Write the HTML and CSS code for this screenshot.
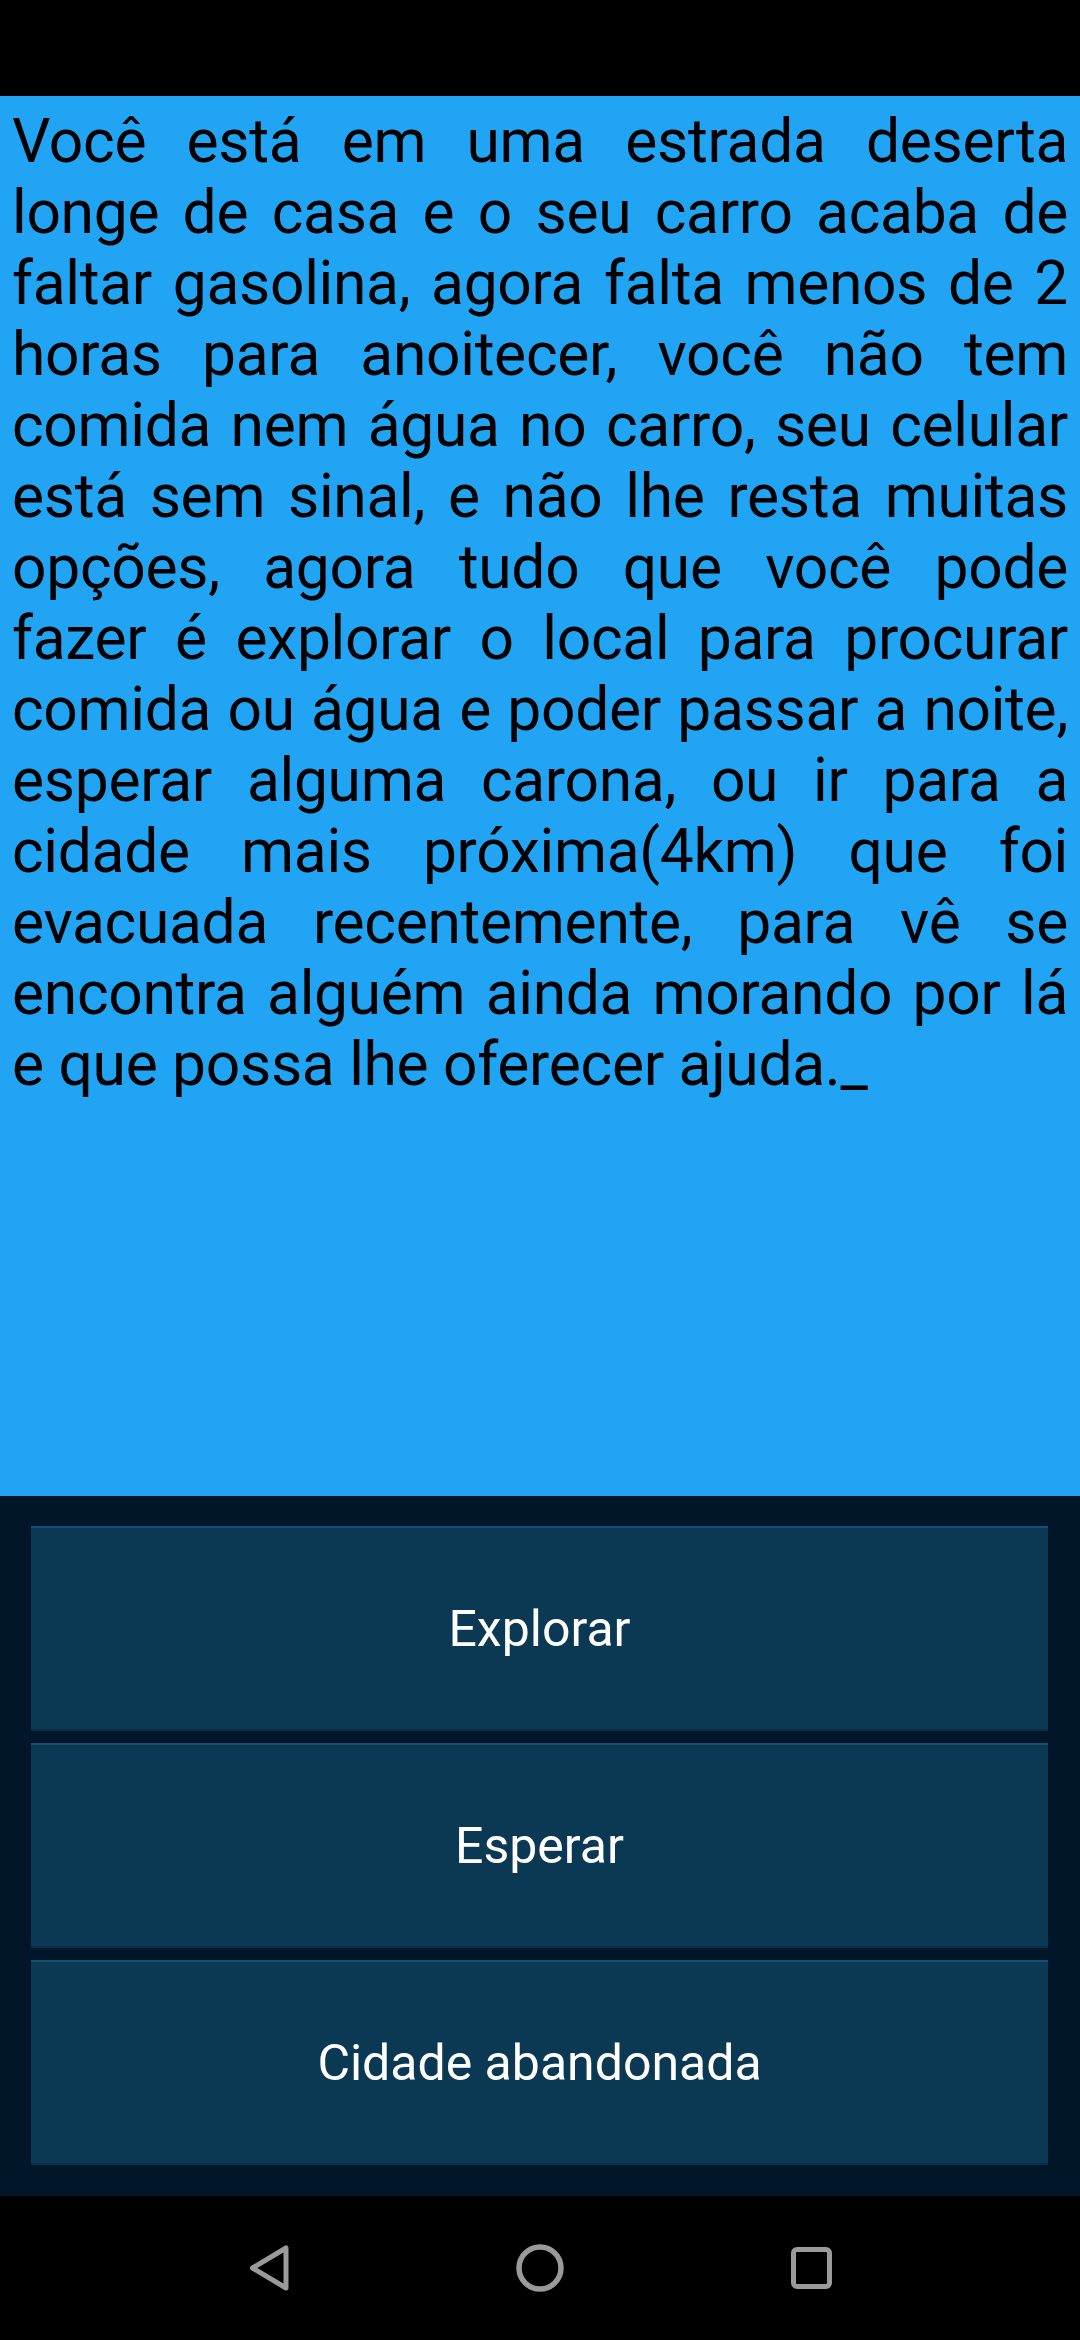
FILE: index.html
```html
<!DOCTYPE html>
<html lang="pt">
<head>
<meta charset="utf-8">
<title>Estrada deserta</title>
<link rel="stylesheet" href="styles.css">
</head>
<body>
<div class="screen">
  <div class="status-bar"></div>
  <main class="story">
    <p class="story-text"><span class="line">Você está em uma estrada deserta</span><span class="line">longe de casa e o seu carro acaba de</span><span class="line">faltar gasolina, agora falta menos de 2</span><span class="line">horas para anoitecer, você não tem</span><span class="line">comida nem água no carro, seu celular</span><span class="line">está sem sinal, e não lhe resta muitas</span><span class="line">opções, agora tudo que você pode</span><span class="line">fazer é explorar o local para procurar</span><span class="line">comida ou água e poder passar a noite,</span><span class="line">esperar alguma carona, ou ir para a</span><span class="line">cidade mais próxima(4km) que foi</span><span class="line">evacuada recentemente, para vê se</span><span class="line">encontra alguém ainda morando por lá</span><span class="line last">e que possa lhe oferecer ajuda._</span></p>
  </main>
  <section class="choices">
    <button class="choice">Explorar</button>
    <button class="choice">Esperar</button>
    <button class="choice">Cidade abandonada</button>
  </section>
  <nav class="nav-bar">
    <svg class="nav-icon" viewBox="0 0 60 60" width="60" height="60"><path d="M47 10 L47 50 L13.5 30 Z" fill="none" stroke="#9a9a9a" stroke-width="5" stroke-linejoin="round"/></svg>
    <svg class="nav-icon" viewBox="0 0 60 60" width="60" height="60"><circle cx="30" cy="30" r="21" fill="none" stroke="#9a9a9a" stroke-width="5.5"/></svg>
    <svg class="nav-icon" viewBox="0 0 60 60" width="60" height="60"><rect x="12.5" y="11.5" width="36" height="37" rx="3.5" fill="none" stroke="#9a9a9a" stroke-width="5"/></svg>
  </nav>
</div>
</body>
</html>
```
FILE: styles.css
```css
html, body {
  margin: 0;
  padding: 0;
  background: #000;
}
.screen {
  width: 1080px;
  height: 2340px;
  display: flex;
  flex-direction: column;
  font-family: Roboto, "Noto Sans", sans-serif;
}
.status-bar {
  height: 96px;
  background: #000;
  flex: none;
}
.story {
  flex: 1;
  background: #22a4f4;
  padding: 10px 12px 0;
}
.story-text {
  margin: 0;
  color: #000;
  font-size: 60.5px;
  line-height: 71px;
  letter-spacing: -0.3px;
}
.line {
  display: block;
  text-align: justify;
  text-align-last: justify;
}
.line.last {
  text-align: left;
  text-align-last: left;
}
.choices {
  flex: none;
  height: 700px;
  box-sizing: border-box;
  background: #011628;
  padding: 30px 32px 32px 31px;
  display: flex;
  flex-direction: column;
  gap: 12px;
}
.choice {
  flex: none;
  height: 205px;
  margin: 0;
  padding: 0;
  border: none;
  border-top: 2px solid #15507a;
  border-bottom: 2px solid #082d45;
  background: #0b3853;
  color: #fff;
  font-family: Roboto, "Noto Sans", sans-serif;
  font-size: 50px;
  display: flex;
  align-items: center;
  justify-content: center;
}
.nav-bar {
  flex: none;
  height: 144px;
  background: #000;
  display: flex;
  align-items: center;
  justify-content: center;
  gap: 211px;
}
.nav-icon {
  display: block;
}
```
